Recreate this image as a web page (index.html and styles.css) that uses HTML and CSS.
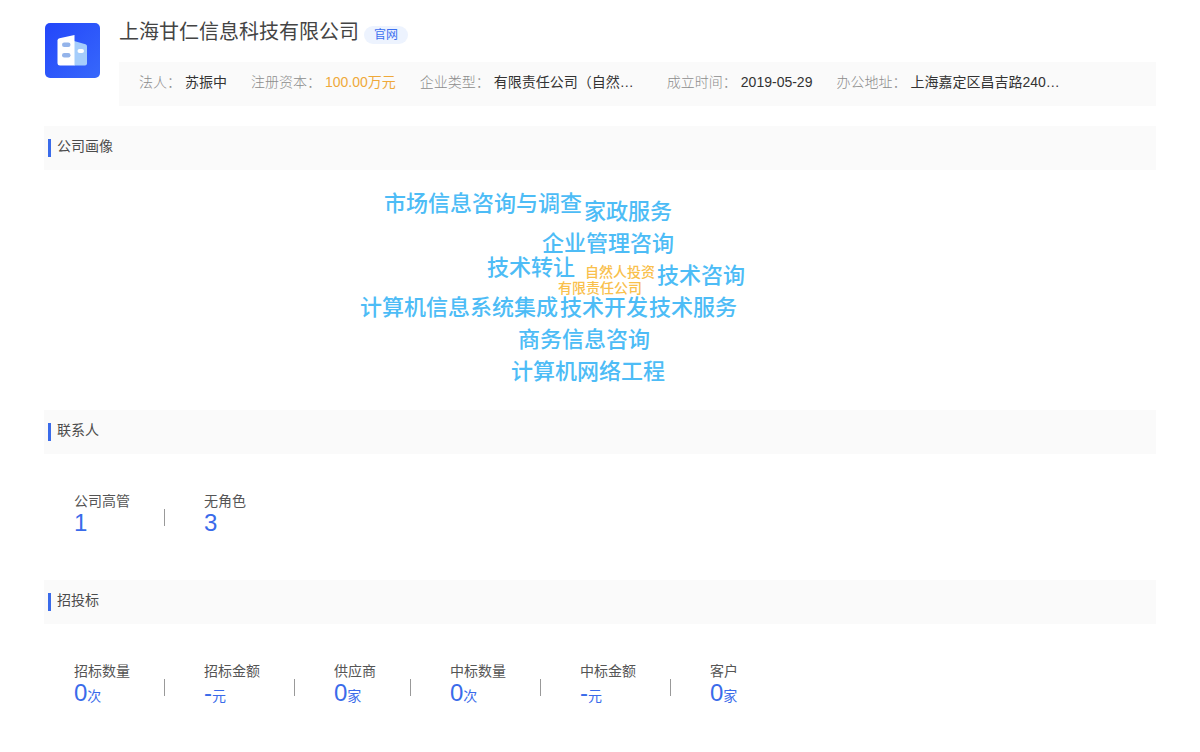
FILE: index.html
```html
<!DOCTYPE html>
<html lang="zh-CN">
<head>
<meta charset="utf-8">
<title>上海甘仁信息科技有限公司</title>
<link rel="stylesheet" href="styles.css">
</head>
<body>
<main class="page">
  <header class="company">
    <svg class="logo" viewBox="0 0 55 55" aria-hidden="true">
      <defs><linearGradient id="bg" x1="0" y1="0" x2="1" y2="1"><stop offset="0" stop-color="#2346fa"/><stop offset="1" stop-color="#3768fb"/></linearGradient></defs>
      <rect width="55" height="55" rx="5" fill="url(#bg)"/>
      <path d="M29 18L40.500 21.200Q42 21.700 42 23.200V40.500Q42 42.500 40 42.500H29Z" fill="#a5cdfb"/>
      <path d="M14.500 15.200L29.500 12V42.500H15Q12.500 42.500 12.500 40V17.600Q12.500 15.700 14.500 15.200Z" fill="#fff"/>
      <rect x="17" y="19.500" width="8.500" height="4.500" rx="2.200" fill="#94b4ea"/>
      <rect x="17" y="30" width="8.500" height="4.500" rx="2.200" fill="#94b4ea"/>
      <rect x="32.500" y="26" width="6.500" height="4" rx="2" fill="#fff"/>
    </svg>
    <div class="company-main">
      <div class="title-row">
        <h1 class="name">上海甘仁信息科技有限公司</h1>
        <a class="badge" href="#">官网</a>
      </div>
      <dl class="facts">
        <div class="fact"><dt>法人：</dt><dd>苏振中</dd></div>
        <div class="fact"><dt>注册资本：</dt><dd class="money">100.00万元</dd></div>
        <div class="fact"><dt>企业类型：</dt><dd class="long">有限责任公司（自然…</dd></div>
        <div class="fact"><dt>成立时间：</dt><dd>2019-05-29</dd></div>
        <div class="fact"><dt>办公地址：</dt><dd class="long">上海嘉定区昌吉路240…</dd></div>
      </dl>
    </div>
  </header>

  <section>
    <h2 class="section-title">公司画像</h2>
    <div class="cloud">
      <span class="word w1">市场信息咨询与调查</span>
      <span class="word w2">家政服务</span>
      <span class="word w3">企业管理咨询</span>
      <span class="word w4">技术转让</span>
      <span class="word minor w5">自然人投资</span>
      <span class="word w6">技术咨询</span>
      <span class="word minor w7">有限责任公司</span>
      <span class="word w8">计算机信息系统集成</span>
      <span class="word w9">技术开发</span>
      <span class="word w10">技术服务</span>
      <span class="word w11">商务信息咨询</span>
      <span class="word w12">计算机网络工程</span>
    </div>
  </section>

  <section>
    <h2 class="section-title">联系人</h2>
    <ul class="stats">
      <li class="stat"><span class="label">公司高管</span><span class="value">1</span></li>
      <li class="stat"><span class="label">无角色</span><span class="value">3</span></li>
    </ul>
  </section>

  <section>
    <h2 class="section-title">招投标</h2>
    <ul class="stats">
      <li class="stat"><span class="label">招标数量</span><span class="value">0<small>次</small></span></li>
      <li class="stat"><span class="label">招标金额</span><span class="value">-<small>元</small></span></li>
      <li class="stat"><span class="label">供应商</span><span class="value">0<small>家</small></span></li>
      <li class="stat"><span class="label">中标数量</span><span class="value">0<small>次</small></span></li>
      <li class="stat"><span class="label">中标金额</span><span class="value">-<small>元</small></span></li>
      <li class="stat"><span class="label">客户</span><span class="value">0<small>家</small></span></li>
    </ul>
  </section>
</main>
</body>
</html>
```

FILE: styles.css
```css
* { box-sizing: border-box; margin: 0; padding: 0; }
body {
  background: #fff;
  color: #444;
  font: 14px/20px "Liberation Sans", "Noto Sans CJK SC", sans-serif;
}
.page { padding: 16px 44px; }
.company { display: flex; gap: 19px; margin-bottom: 20px; }
.logo { width: 55px; height: 55px; margin: 7px 0 0 1px; flex: none; }
.company-main { flex: 1; min-width: 0; }
.title-row { display: flex; align-items: flex-end; gap: 5px; height: 28px; margin-bottom: 18px; }
.name { font-size: 20px; line-height: 24px; font-weight: 400; color: #444; }
.badge {
  padding: 0 10px;
  border-radius: 9px;
  background: #edf3fe;
  color: #3c6ff0;
  font-size: 12px;
  line-height: 18px;
  text-decoration: none;
}
.facts { display: flex; gap: 24px; padding: 10px 20px 14px; background: #fafafa; white-space: nowrap; }
.fact { display: flex; gap: 4px; }
.fact dt { color: #8c8c8c; font-weight: 300; }
.fact dd { color: #333; }
.fact .money { color: #efa93a; }
.fact .long { width: 149px; }

.section-title {
  display: flex;
  gap: 6px;
  height: 44px;
  padding: 10px 4px;
  background: #fafafa;
  font-size: 14px;
  font-weight: 400;
  color: #4c4c4c;
}
.section-title::before { content: ""; width: 3px; height: 18px; margin-top: 3px; background: #3a6bea; }

.cloud { position: relative; height: 240px; }
.word {
  position: absolute;
  color: #4dbcf6;
  font-size: 22px;
  line-height: 32px;
  font-weight: 500;
  white-space: nowrap;
}
.minor { color: #f9c04c; font-size: 14px; line-height: 16px; }
.w1 { left: 340px; top: 18px; }
.w2 { left: 540px; top: 26px; }
.w3 { left: 498px; top: 58px; }
.w4 { left: 443px; top: 82px; }
.w5 { left: 541px; top: 94px; }
.w6 { left: 613px; top: 90px; }
.w7 { left: 514px; top: 110px; }
.w8 { left: 316px; top: 122px; }
.w9 { left: 516px; top: 122px; }
.w10 { left: 605px; top: 122px; }
.w11 { left: 474px; top: 154px; }
.w12 { left: 467px; top: 186px; }

.stats { display: flex; padding: 37px 30px 43px; list-style: none; }
.stat { display: flex; flex-direction: column; position: relative; }
.stat + .stat { margin-left: 74px; }
.stat + .stat::before {
  content: "";
  position: absolute;
  left: -40px;
  top: 18px;
  width: 1px;
  height: 17px;
  background: #999;
}
.label { color: #555; line-height: 20px; }
.value { color: #3a6bea; font-size: 24px; line-height: 24px; height: 26px; }
.value small { font-size: 14px; }
```
